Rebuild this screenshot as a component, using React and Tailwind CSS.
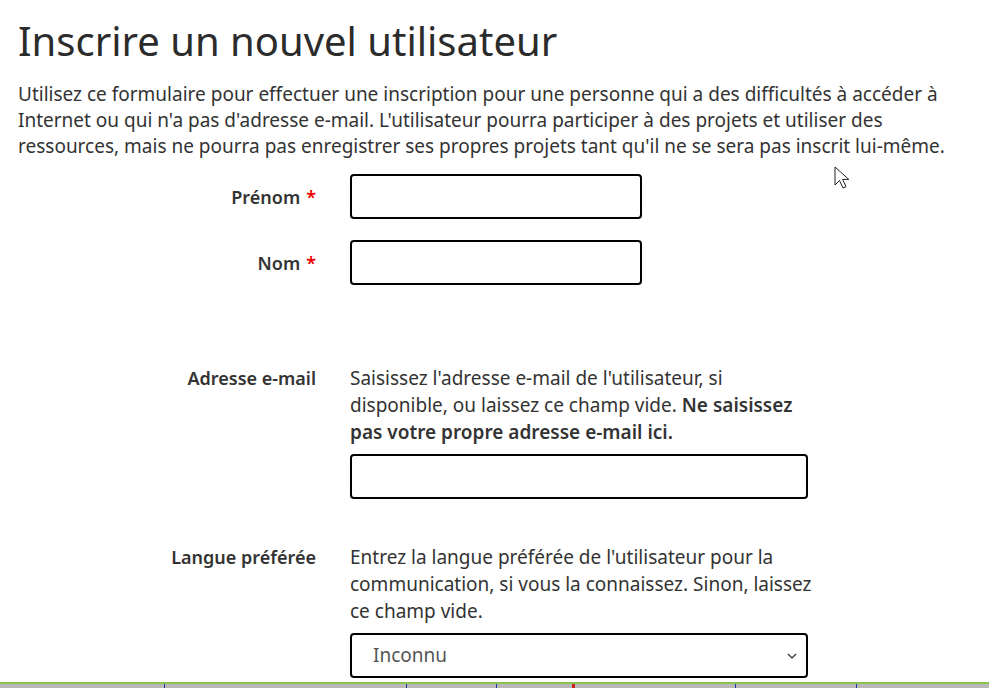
import React from "react";

function Row({ label, required, children, className = "" }) {
  return (
    <div className={`grid grid-cols-[298px_1fr] gap-x-[34px] ${className}`}>
      <label className="text-right text-[18px] font-semibold leading-[26px] text-[#333]">
        {label}
        {required && <span className="ml-[6px] text-[#e00]">*</span>}
      </label>
      <div>{children}</div>
    </div>
  );
}

function Cursor() {
  return (
    <svg className="absolute left-[834px] top-[166px]" width="18" height="28" viewBox="0 0 18 28">
      <path
        d="M1 1 L1 19 L5.5 14.5 L9 22 L12 20.7 L8.6 13.4 L14.8 13.4 Z"
        fill="#fff"
        stroke="#222"
        strokeWidth="1"
        strokeLinejoin="miter"
      />
    </svg>
  );
}

export default function App() {
  return (
    <div className="relative flex min-h-[688px] flex-col bg-white font-['Noto_Sans',sans-serif] text-[#333]">
      <div className="px-[18px] pt-[17px]">
        <h1 className="text-[40px] leading-[48px] font-normal text-[#2b2b2b]">
          Inscrire un nouvel utilisateur
        </h1>
        <p className="mt-[16px] max-w-[940px] text-[19px] leading-[26px]">
          Utilisez ce formulaire pour effectuer une inscription pour une personne qui a des difficultés à accéder à
          Internet ou qui n'a pas d'adresse e-mail. L'utilisateur pourra participer à des projets et utiliser des
          ressources, mais ne pourra pas enregistrer ses propres projets tant qu'il ne se sera pas inscrit lui-même.
        </p>

        <Row label="Prénom" required className="mt-[15px] items-center">
          <input className="block h-[45px] w-[292px] rounded-[4px] border-2 border-black bg-white px-3" />
        </Row>
        <Row label="Nom" required className="mt-[21px] items-center">
          <input className="block h-[45px] w-[292px] rounded-[4px] border-2 border-black bg-white px-3" />
        </Row>

        <Row label="Adresse e-mail" className="mt-[80px]">
          <div className="w-[464px]">
            <p className="text-[19px] leading-[27px]">
              Saisissez l'adresse e-mail de l'utilisateur, si disponible, ou laissez ce champ vide.{" "}
              <strong className="font-semibold">Ne saisissez pas votre propre adresse e-mail ici.</strong>
            </p>
            <input className="mt-[8px] block h-[45px] w-[458px] rounded-[4px] border-2 border-black bg-white px-3" />
          </div>
        </Row>

        <Row label="Langue préférée" className="mt-[45px]">
          <div className="w-[464px]">
            <p className="text-[19px] leading-[27px]">
              Entrez la langue préférée de l'utilisateur pour la communication, si vous la connaissez. Sinon, laissez
              ce champ vide.
            </p>
            <div className="mt-[8px] flex h-[45px] w-[458px] items-center justify-between rounded-[4px] border-2 border-black bg-white pl-[21px] pr-[7px]">
              <span className="text-[19px] text-[#555]">Inconnu</span>
              <svg width="14" height="14" viewBox="0 0 14 14">
                <path d="M3 5 L7 9 L11 5" fill="none" stroke="#444" strokeWidth="1.5" />
              </svg>
            </div>
          </div>
        </Row>
      </div>

      <div className="mt-auto">
        <div className="h-[2px] bg-[#8bc34a]" />
        <div className="flex h-[4px] bg-[#b8b8b8]">
          <div className="w-[164px]" />
          <div className="w-[1px] bg-[#2233aa]" />
          <div className="w-[241px]" />
          <div className="w-[1px] bg-[#2233aa]" />
          <div className="w-[89px]" />
          <div className="w-[1px] bg-[#2233aa]" />
          <div className="w-[75px]" />
          <div className="w-[3px] bg-[#cc2222]" />
          <div className="w-[160px]" />
          <div className="w-[1px] bg-[#2233aa]" />
          <div className="w-[120px]" />
          <div className="w-[1px] bg-[#2233aa]" />
        </div>
      </div>

      <Cursor />
    </div>
  );
}
